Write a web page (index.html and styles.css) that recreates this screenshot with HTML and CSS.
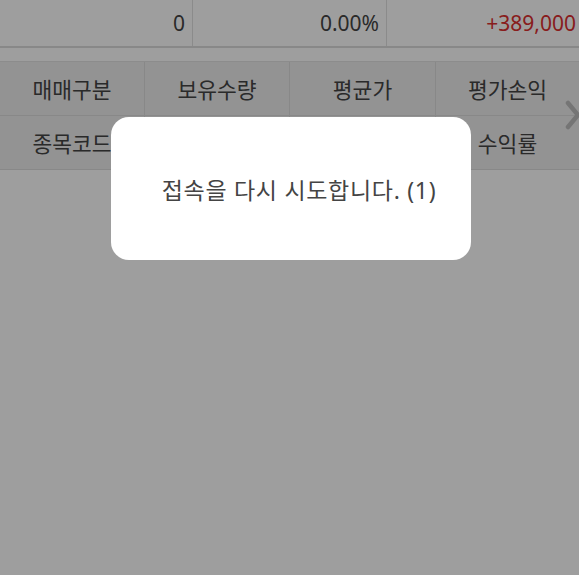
FILE: index.html
```html
<!DOCTYPE html>
<html lang="ko">
<head>
<meta charset="utf-8">
<link rel="stylesheet" href="styles.css">
</head>
<body>
<div class="summary">
  <div class="cell">0</div>
  <div class="cell">0.00%</div>
  <div class="cell up">+389,000</div>
</div>
<div class="table-wrap">
  <div class="thead">
    <div class="th">매매구분</div>
    <div class="th">보유수량</div>
    <div class="th">평균가</div>
    <div class="th">평가손익</div>
    <div class="th">종목코드</div>
    <div class="th">현재가</div>
    <div class="th">평가금액</div>
    <div class="th">수익률</div>
  </div>
  <svg class="chev" width="18" height="32" viewBox="0 0 18 32"><path d="M4 4 L14 16 L4 28" fill="none" stroke="#bdbdbd" stroke-width="4.5" stroke-linecap="round" stroke-linejoin="round"/></svg>
</div>
<div class="overlay">
  <div class="dialog">접속을 다시 시도합니다. (1)</div>
</div>
</body>
</html>
```
FILE: styles.css
```css
html, body {
  margin: 0;
  padding: 0;
  background: #ffffff;
  font-family: "Noto Sans", "Noto Sans CJK KR", sans-serif;
  color: #444;
}
.summary {
  display: grid;
  grid-template-columns: 193px 194px 192px;
  height: 46px;
  border-bottom: 2px solid #dcdcdc;
}
.cell {
  display: flex;
  align-items: center;
  justify-content: flex-end;
  padding-right: 7px;
  font-size: 21px;
  border-right: 1px solid #e0e0e0;
}
.cell:last-child {
  border-right: none;
  padding-right: 3px;
}
.up { color: #dc3030; }
.table-wrap {
  position: relative;
  margin-top: 13px;
}
.thead {
  display: grid;
  grid-template-columns: 145px 145px 146px 143px;
  background: #ededed;
  border-top: 1px solid #e2e2e2;
}
.th {
  height: 53px;
  display: flex;
  align-items: center;
  justify-content: center;
  font-size: 21.5px;
  border-right: 1px solid #dcdcdc;
  border-bottom: 1px solid #dcdcdc;
}
.th:nth-child(4n) { border-right: none; }
.chev {
  position: absolute;
  right: -3px;
  top: 38px;
}
.overlay {
  position: fixed;
  inset: 0;
  background: rgba(0, 0, 0, 0.38);
}
.dialog {
  position: absolute;
  left: 111px;
  top: 117px;
  width: 360px;
  height: 143px;
  background: #ffffff;
  border-radius: 18px;
  display: flex;
  align-items: center;
  justify-content: center;
  padding-left: 16px;
  font-size: 23px;
  letter-spacing: 0.7px;
  color: #444;
  box-sizing: border-box;
}
```
